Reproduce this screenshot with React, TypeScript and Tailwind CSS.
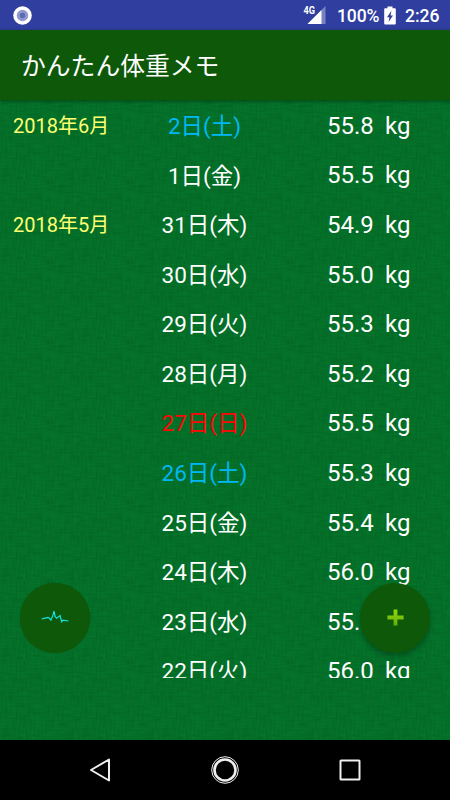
type Entry = { month?: string; day: string; weight: string; tone?: "sat" | "sun" };

const entries: Entry[] = [
  { month: "2018年6月", day: "2日(土)", weight: "55.8", tone: "sat" },
  { day: "1日(金)", weight: "55.5" },
  { month: "2018年5月", day: "31日(木)", weight: "54.9" },
  { day: "30日(水)", weight: "55.0" },
  { day: "29日(火)", weight: "55.3" },
  { day: "28日(月)", weight: "55.2" },
  { day: "27日(日)", weight: "55.5", tone: "sun" },
  { day: "26日(土)", weight: "55.3", tone: "sat" },
  { day: "25日(金)", weight: "55.4" },
  { day: "24日(木)", weight: "56.0" },
  { day: "23日(水)", weight: "55.1" },
  { day: "22日(火)", weight: "56.0" },
];

const tones = { sat: "text-[#00b7f5]", sun: "text-[#ff0505]" };

function StatusBar() {
  return (
    <div className="flex h-[30px] shrink-0 items-center bg-[#303f9f] pr-[10px] pl-[13px] text-white">
      <svg width="19" height="19" viewBox="0 0 19 19">
        <circle cx="9.5" cy="9.5" r="9.3" fill="#fff" />
        <circle cx="9.5" cy="9.5" r="5.7" fill="#9098cd" />
        <circle cx="9.5" cy="9.5" r="2.7" fill="#5d69b3" />
      </svg>
      <div className="flex-1" />
      <svg width="24" height="20" viewBox="0 0 24 20" className="mr-[10px]">
        <path d="M22.5 1V19H4.5Z" fill="#7983c1" />
        <path d="M18.5 5V19H4.5Z" fill="#fff" />
        <rect x="0" y="0" width="12.5" height="10" fill="#303f9f" />
        <text x="0.5" y="9" fontSize="10.5" fontWeight="700" fill="#fff" textLength="11.5" lengthAdjust="spacingAndGlyphs">
          4G
        </text>
      </svg>
      <span className="w-[43px] pt-px text-[17.5px] leading-5 font-medium tracking-[-0.1px]">100%</span>
      <svg width="12" height="19" viewBox="0 0 12 19" className="ml-[4px]">
        <path
          fill="#fff"
          fillRule="evenodd"
          d="M3.5.5h5v1.7h2.3q1 0 1 1v14.3q0 1-1 1H1.2q-1 0-1-1V3.2q0-1 1-1h2.3zM7.4 4.8 3 11.2h2.4l-.8 4.8 4.4-6.6H6.6z"
        />
      </svg>
      <span className="ml-[9px] w-[35px] pt-px text-[17.5px] leading-5 font-medium whitespace-nowrap">2:26</span>
    </div>
  );
}

/* Woven cloth: stretched noise along each axis, repeated as an 80px tile. */
function Cloth() {
  return (
    <svg className="absolute inset-0 h-full w-full" aria-hidden="true">
      <defs>
        <filter id="weft" x="0" y="0" width="100%" height="100%" colorInterpolationFilters="sRGB">
          <feTurbulence type="fractalNoise" baseFrequency="0.07 0.5" numOctaves="1" seed="4" />
          <feColorMatrix values="0 0 0 0 0  0 0 0 0 0.2  0 0 0 0 0.08  1.6 0 0 0 -0.5" />
        </filter>
        <filter id="warp" x="0" y="0" width="100%" height="100%" colorInterpolationFilters="sRGB">
          <feTurbulence type="fractalNoise" baseFrequency="0.5 0.07" numOctaves="1" seed="9" />
          <feColorMatrix values="0 0 0 0 0  0 0 0 0 0.2  0 0 0 0 0.08  1.6 0 0 0 -0.5" />
        </filter>
        <pattern id="cloth" width="80" height="80" patternUnits="userSpaceOnUse">
          <rect width="80" height="80" fill="#04762a" />
          <rect width="80" height="80" filter="url(#weft)" opacity="0.2" />
          <rect width="80" height="80" filter="url(#warp)" opacity="0.2" />
        </pattern>
      </defs>
      <rect width="100%" height="100%" fill="url(#cloth)" />
    </svg>
  );
}

function Row({ month, day, weight, tone }: Entry) {
  return (
    <li className="flex h-[49.6px] shrink-0 items-center text-white">
      <span className="w-[121px] pt-px pl-[13px] text-[20px] text-[#ffff72]">{month}</span>
      <span className={`w-[167px] pt-[2px] text-center text-[22.5px] ${tone ? tones[tone] : ""}`}>{day}</span>
      <span className="w-[97px] pl-[39px] text-[24px]">{weight}</span>
      <span className="text-[24px]">kg</span>
    </li>
  );
}

export default function App() {
  return (
    <div className="flex h-[800px] w-[450px] flex-col overflow-hidden bg-black font-[Roboto,'Noto_Sans_CJK_JP',sans-serif]">
      <StatusBar />
      <header className="relative z-10 flex h-[70px] shrink-0 items-center bg-[#0e5909] pt-[3px] pl-[21px] shadow-[0_1px_4px_rgba(0,0,0,0.4)]">
        <h1 className="text-[24.8px] leading-8 text-white">かんたん体重メモ</h1>
      </header>
      <main className="relative h-[640px] shrink-0">
        <Cloth />
        <ul className="relative flex h-[578px] flex-col overflow-hidden pt-[1px]">
          {entries.map((e) => (
            <Row key={e.day} {...e} />
          ))}
        </ul>
        <button className="absolute top-[483px] left-[20px] flex size-[70px] items-center justify-center rounded-full bg-[#0e5909] shadow-[0_0_1px_rgba(20,70,10,0.8)]">
          <svg width="28" height="14" viewBox="0 0 28 14" fill="none" stroke="#14e5e5" strokeWidth="1.2" className="-mt-[2px]">
            <path d="M.7 9.2 3 8.3l4-.8 1.4.8 1.5 1.8 1.8-4.2L13 1.2l1.1 5.4 1.7 1.7L19 5.6l1.7 6.1 1.2-1.6 5.5.9" />
          </svg>
        </button>
        <button className="absolute top-[483px] left-[360px] flex size-[70px] items-center justify-center rounded-full bg-[#0e5909] shadow-[0_3px_5px_rgba(0,0,0,0.28)]">
          <svg width="17" height="17" viewBox="0 0 17 17" className="-mt-px">
            <defs>
              <linearGradient id="plus" x1="0" y1="0" x2="0" y2="1">
                <stop offset="0" stopColor="#91d80c" />
                <stop offset="1" stopColor="#65ac0b" />
              </linearGradient>
            </defs>
            <path d="M6.6.4h3.8v6.2h6.2v3.8h-6.2v6.2H6.6v-6.2H.4V6.6h6.2z" fill="url(#plus)" />
          </svg>
        </button>
      </main>
      <nav className="flex h-[60px] shrink-0 items-center bg-black pl-[37px]">
        <div className="flex w-[125px] justify-center">
          <svg width="24" height="26" viewBox="0 0 24 26" fill="none" stroke="#eee" strokeWidth="2" strokeLinejoin="round">
            <path d="M21 2.5v21L3 13z" />
          </svg>
        </div>
        <div className="flex w-[125px] justify-center">
          <svg width="28" height="28" viewBox="0 0 28 28" fill="none" stroke="#eee">
            <circle cx="14" cy="14" r="13.3" strokeWidth="1" />
            <circle cx="14" cy="14" r="10.5" strokeWidth="2.6" />
          </svg>
        </div>
        <div className="flex w-[125px] justify-center">
          <svg width="22" height="22" viewBox="0 0 22 22" fill="none" stroke="#eee" strokeWidth="2" strokeLinejoin="round">
            <rect x="1.5" y="1.5" width="19" height="19" rx="0.5" />
          </svg>
        </div>
      </nav>
    </div>
  );
}
